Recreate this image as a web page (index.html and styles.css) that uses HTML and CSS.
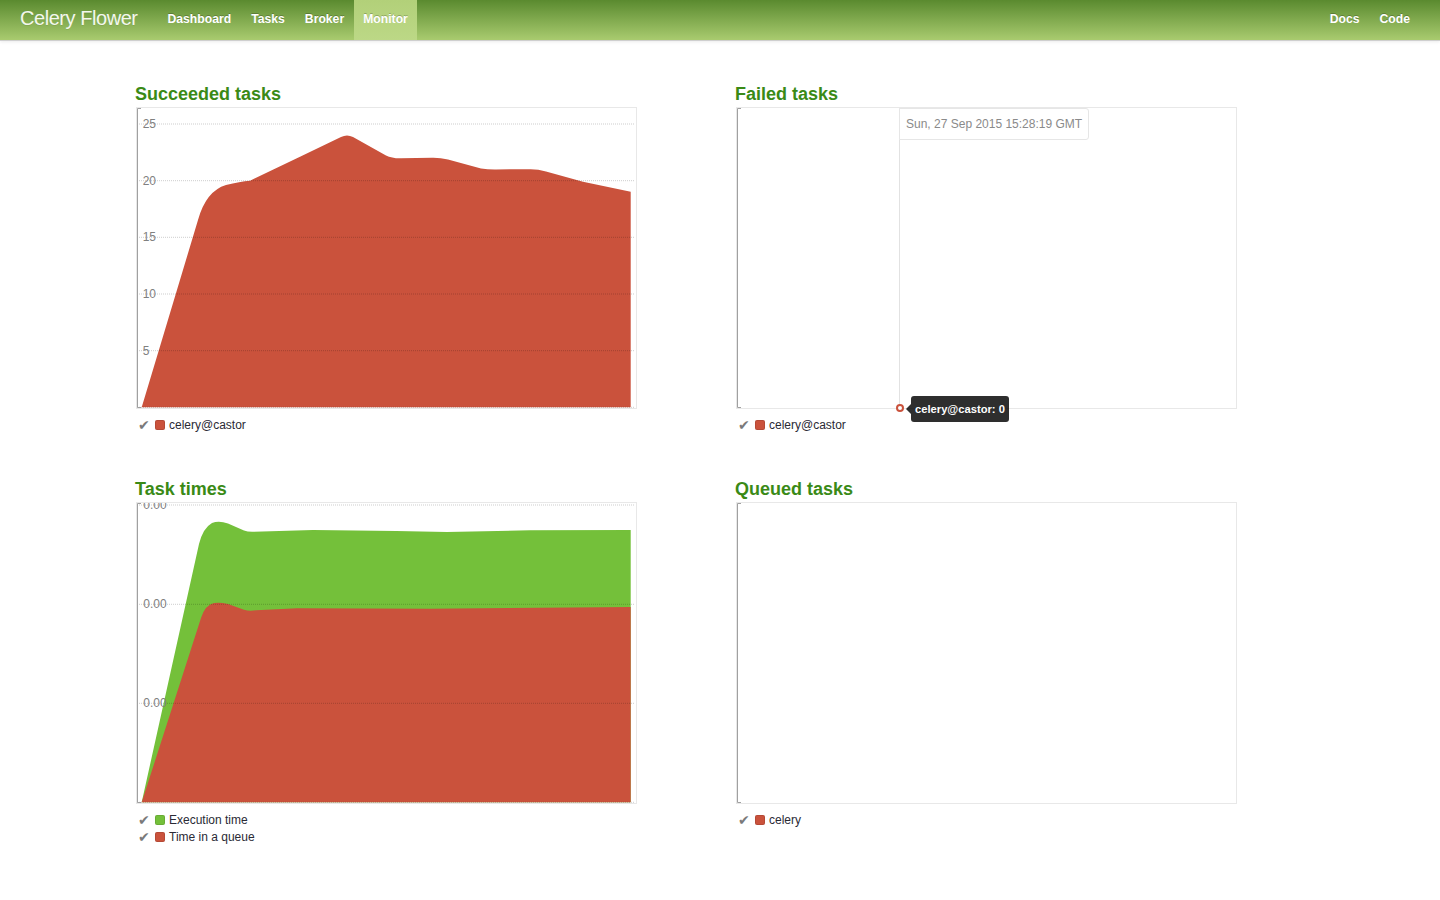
FILE: index.html
```html
<!DOCTYPE html>
<html lang="en">
<head>
<meta charset="utf-8">
<title>Celery Flower - Monitor</title>
<link rel="stylesheet" href="styles.css">
</head>
<body>
<header class="navbar">
  <div class="nav-inner">
    <a class="brand" href="#">Celery Flower</a>
    <ul class="nav">
      <li><a href="#">Dashboard</a></li>
      <li><a href="#">Tasks</a></li>
      <li><a href="#">Broker</a></li>
      <li class="active"><a href="#">Monitor</a></li>
    </ul>
    <ul class="nav nav-right">
      <li><a href="#">Docs</a></li>
      <li><a href="#">Code</a></li>
    </ul>
  </div>
</header>

<main class="container">
  <div class="grid">
    <section class="panel">
      <h3>Succeeded tasks</h3>
      <div class="chart">
        <svg class="plot" width="499" height="300" viewBox="1 1 499 300">
          <path class="area-red" d="M5.7,300.3 L62,113 Q70,84 90,78 Q104,74.5 114,73.7 L164,49.7 L205,30 Q211,26.8 217,30 L250,48.5 Q256,51.5 265,51.3 L296,50.7 Q304,50.5 312,52.5 L345,61.5 Q352,62.5 360,62.4 L394,62.3 Q402,62.2 410,64.5 L447,74.7 L494.7,84.7 L494.7,300.3 Z"/>
          <g class="grid-lines">
            <line x1="1" x2="499" y1="17" y2="17"/>
            <line x1="1" x2="499" y1="73.7" y2="73.7"/>
            <line x1="1" x2="499" y1="130.3" y2="130.3"/>
            <line x1="1" x2="499" y1="187" y2="187"/>
            <line x1="1" x2="499" y1="243.7" y2="243.7"/>
            <line x1="1" x2="499" y1="300.3" y2="300.3"/>
          </g>
          <g class="ticks">
            <text x="6.7" y="17">25</text>
            <text x="6.7" y="73.7">20</text>
            <text x="6.7" y="130.3">15</text>
            <text x="6.7" y="187">10</text>
            <text x="6.7" y="243.7">5</text>
          </g>
          <path class="axis" d="M5,1.5 H1.5 V300.5 H5"/>
        </svg>
      </div>
      <div class="legend">
        <div class="legend-line"><span class="check">✔</span><span class="swatch red"></span><span class="label">celery@castor</span></div>
      </div>
    </section>

    <section class="panel">
      <h3>Failed tasks</h3>
      <div class="chart">
        <svg class="plot" width="499" height="300" viewBox="1 1 499 300">
          <path class="axis" d="M5,1.5 H1.5 V300.5 H5"/>
        </svg>
        <div class="hover-line"></div>
        <div class="x-label">Sun, 27 Sep 2015 15:28:19 GMT</div>
        <div class="dot"></div>
        <div class="item-tip">celery@castor: 0</div>
      </div>
      <div class="legend">
        <div class="legend-line"><span class="check">✔</span><span class="swatch red"></span><span class="label">celery@castor</span></div>
      </div>
    </section>

    <section class="panel">
      <h3>Task times</h3>
      <div class="chart">
        <svg class="plot" width="499" height="300" viewBox="1 1 499 300">
          <path class="area-green" d="M5.7,300.3 L63,42 Q67,26 76,21 Q83,18.5 92,21.5 L108,28.5 Q112,30 118,29.7 L177,28 L260,29 L311,30 L394,28.3 L494.7,28 L494.7,300.3 Z"/>
          <path class="area-red" d="M5.7,300.3 L65,116 Q69,103 78,101 Q84,100 92,102 L108,107.8 Q113,109.2 120,108.3 L161,106.3 L294,106.7 L494.7,105 L494.7,300.3 Z"/>
          <g class="grid-lines">
            <line x1="1" x2="499" y1="3" y2="3"/>
            <line x1="1" x2="499" y1="102.3" y2="102.3"/>
            <line x1="1" x2="499" y1="201.3" y2="201.3"/>
            <line x1="1" x2="499" y1="300.3" y2="300.3"/>
          </g>
          <g class="ticks">
            <text x="7.3" y="3">0.00</text>
            <text x="7.3" y="102.3">0.00</text>
            <text x="7.3" y="201.3">0.00</text>
          </g>
          <path class="axis" d="M5,1.5 H1.5 V300.5 H5"/>
        </svg>
      </div>
      <div class="legend">
        <div class="legend-line"><span class="check">✔</span><span class="swatch green"></span><span class="label">Execution time</span></div>
        <div class="legend-line"><span class="check">✔</span><span class="swatch red"></span><span class="label">Time in a queue</span></div>
      </div>
    </section>

    <section class="panel">
      <h3>Queued tasks</h3>
      <div class="chart">
        <svg class="plot" width="499" height="300" viewBox="1 1 499 300">
          <path class="axis" d="M5,1.5 H1.5 V300.5 H5"/>
        </svg>
      </div>
      <div class="legend">
        <div class="legend-line"><span class="check">✔</span><span class="swatch red"></span><span class="label">celery</span></div>
      </div>
    </section>
  </div>
</main>
</body>
</html>
```

FILE: styles.css
```css
body {
  margin: 0;
  background: #fff;
  color: #333;
  font-family: "Liberation Sans", Arial, Helvetica, sans-serif;
}

/* Navbar */
.navbar {
  height: 40px;
  background: linear-gradient(#5a8a2f, #a9cb6f);
  border-bottom: 1px solid #cfcfcf;
  box-shadow: 0 1px 3px rgba(0, 0, 0, 0.08);
}
.nav-inner {
  display: flex;
  height: 40px;
  padding: 0 20px;
}
.brand {
  font-size: 20px;
  letter-spacing: -0.45px;
  line-height: 37px;
  color: #f3f7ee;
  text-decoration: none;
  margin-right: 20px;
  text-shadow: 0 1px 0 rgba(0, 0, 0, 0.08);
}
.nav {
  display: flex;
  list-style: none;
  margin: 0;
  padding: 0;
}
.nav a {
  display: block;
  height: 40px;
  padding: 0 10px;
  line-height: 38px;
  font-size: 12.2px;
  font-weight: bold;
  color: #fff;
  text-decoration: none;
  text-shadow: 0 -1px 0 rgba(0, 0, 0, 0.22);
}
.nav .active a {
  padding: 0 9px;
  background: linear-gradient(#b2d079, #bcd886);
}
.nav-right {
  margin-left: auto;
}

/* Layout */
.container {
  width: 1170px;
  margin: 0 auto;
  padding-top: 42px;
}
.grid {
  display: grid;
  grid-template-columns: 570px 570px;
  column-gap: 30px;
  row-gap: 44px;
}
.panel h3 {
  margin: 0 0 3px;
  padding-top: 1px;
  font-size: 18px;
  line-height: 20px;
  font-weight: bold;
  color: #3a8a16;
}
.chart {
  position: relative;
  width: 499px;
  height: 300px;
  margin-left: 1px;
  border: 1px solid #e8e8e8;
}
.plot {
  display: block;
}
.area-red {
  fill: #ca523c;
}
.area-green {
  fill: #74c03a;
}
.grid-lines line {
  stroke: rgba(0, 0, 0, 0.2);
  stroke-width: 1;
  stroke-dasharray: 1 1;
}
.ticks text {
  font-family: "Liberation Sans", Arial, sans-serif;
  font-size: 12px;
  fill: #808080;
  dominant-baseline: central;
}
.axis {
  fill: none;
  stroke: #a0a0a0;
  stroke-width: 1;
}

/* Hover detail (overlay) */
.hover-line {
  position: absolute;
  left: 162px;
  top: 0;
  bottom: 0;
  width: 1px;
  background: #e2e2e2;
}
.x-label {
  position: absolute;
  left: 162px;
  top: 0;
  padding: 8px 6px 7px 6px;
  line-height: 15px;
  font-size: 12px;
  color: #8a8a8a;
  background: #fff;
  border: 1px solid #e6e6e6;
  border-radius: 0 3px 3px 0;
  white-space: nowrap;
}
.dot {
  position: absolute;
  left: 159px;
  top: 296px;
  width: 4px;
  height: 4px;
  border: 2px solid #ca523c;
  border-radius: 50%;
  background: #fff;
}
.item-tip {
  position: absolute;
  left: 174px;
  top: 288px;
  padding: 5px 4px 5px 4px;
  line-height: 16px;
  font-size: 11.2px;
  font-weight: bold;
  color: #fff;
  background: rgba(0, 0, 0, 0.82);
  border-radius: 3px;
  white-space: nowrap;
}
.item-tip::before {
  content: "";
  position: absolute;
  left: -5px;
  top: 8px;
  border-style: solid;
  border-width: 5px 5px 5px 0;
  border-color: transparent rgba(0, 0, 0, 0.82) transparent transparent;
}

/* Legend */
.legend {
  margin-top: 8px;
  padding-left: 3px;
  font-size: 12px;
  line-height: 17px;
}
.legend-line {
  white-space: nowrap;
  height: 17px;
}
.check {
  display: inline-block;
  width: 17px;
  font-family: "DejaVu Sans", sans-serif;
  font-size: 14px;
  line-height: 17px;
  vertical-align: top;
  color: #7a7a7a;
}
.swatch {
  display: inline-block;
  width: 10px;
  height: 10px;
  margin-right: 4px;
  border-radius: 2px;
  vertical-align: -1px;
}
.swatch.red {
  background: #ca523c;
  box-shadow: inset 0 0 0 1px rgba(0, 0, 0, 0.1);
}
.swatch.green {
  background: #74c03a;
  box-shadow: inset 0 0 0 1px rgba(0, 0, 0, 0.1);
}
.label {
  color: #2a2a35;
}
```
